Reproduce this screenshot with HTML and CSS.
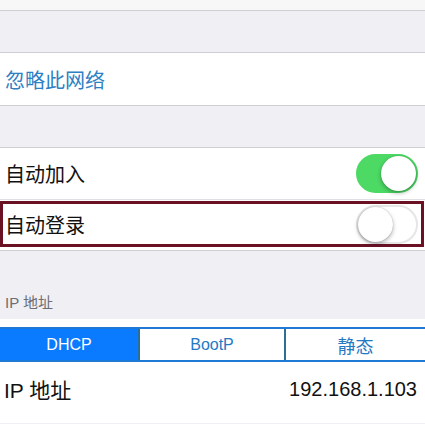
FILE: index.html
```html
<!DOCTYPE html>
<html lang="zh-CN">
<head>
    <meta charset="UTF-8">
    <meta name="viewport" content="width=device-width, initial-scale=1.0">
    <title>Wi-Fi 设置</title>
    <link rel="stylesheet" href="styles.css">
</head>
<body>
    <div class="top-band"></div>

    <div class="group forget">
        <div class="row link">忽略此网络</div>
    </div>

    <div class="group joins">
        <div class="row">
            <span>自动加入</span>
            <div class="toggle on"><div class="knob"></div></div>
        </div>
        <div class="row boxed">
            <div class="frame">
                <span>自动登录</span>
                <div class="toggle"><div class="knob"></div></div>
            </div>
        </div>
    </div>

    <div class="section-title">IP 地址</div>

    <div class="ip-panel">
        <div class="segments">
            <div class="seg active">DHCP</div>
            <div class="seg">BootP</div>
            <div class="seg cjk">静态</div>
        </div>
        <div class="row ip-row">
            <span>IP 地址</span>
            <span class="value">192.168.1.103</span>
        </div>
    </div>
</body>
</html>
```

FILE: styles.css
```css
body {
    margin: 0;
    background-color: #efeff4;
    font-family: "Liberation Sans", "Noto Sans CJK SC", sans-serif;
    color: #111;
    overflow: hidden;
}
.top-band {
    height: 10px;
    background-color: #f7f7f8;
    border-bottom: 1px solid #cfced3;
}
.group {
    background-color: #fff;
    border-top: 1px solid #cfced3;
    border-bottom: 1px solid #cfced3;
}
.forget {
    margin-top: 41px;
}
.joins {
    margin-top: 41px;
}
.row {
    display: flex;
    align-items: center;
    justify-content: space-between;
    height: 51px;
    padding: 0 7px 0 5px;
    font-size: 20px;
}
.forget .row {
    height: 52px;
}
.link {
    color: #2d80c4;
}
.joins .row + .row {
    border-top: 1px solid #e0e0e4;
}
.row.boxed {
    height: 51px;
    padding: 1px 1px 3px 0;
    box-sizing: border-box;
    display: block;
}
.frame {
    height: 100%;
    box-sizing: border-box;
    border: 3px solid #6a1224;
    display: flex;
    align-items: center;
    justify-content: space-between;
    padding: 0 3px 0 2px;
}
.toggle {
    width: 62px;
    height: 39px;
    border-radius: 20px;
    box-sizing: border-box;
    border: 2px solid #e6e6e6;
    background-color: #fff;
    position: relative;
}
.toggle .knob {
    position: absolute;
    top: 0;
    left: 0;
    width: 35px;
    height: 35px;
    border-radius: 50%;
    background-color: #fff;
    box-shadow: 0 2px 4px rgba(0,0,0,0.3), 0 0 1px rgba(0,0,0,0.3);
}
.toggle.on {
    background-color: #4cd964;
    border-color: #4cd964;
}
.toggle.on .knob {
    left: auto;
    right: 0;
}
.section-title {
    height: 68px;
    box-sizing: border-box;
    padding: 40px 0 0 5px;
    font-size: 15px;
    color: #6d6d72;
}
.ip-panel {
    background-color: #fff;
    padding-top: 8px;
    height: 96px;
}
.segments {
    display: grid;
    grid-template-columns: 138px 146px 1fr;
    height: 35px;
    border-top: 2px solid #1f7ad6;
    border-bottom: 2px solid #1f7ad6;
    box-sizing: border-box;
}
.seg {
    display: flex;
    align-items: center;
    justify-content: center;
    font-size: 16px;
    color: #2479c4;
}
.seg.cjk {
    font-size: 18px;
}
.seg + .seg {
    border-left: 2px solid #2b6f93;
}
.seg.active {
    background-color: #0a7bff;
    color: #fff;
}
.ip-row {
    height: 54px;
    padding-right: 8px;
    padding-left: 4px;
    font-size: 21px;
}
.value {
    font-size: 20px;
}
```
